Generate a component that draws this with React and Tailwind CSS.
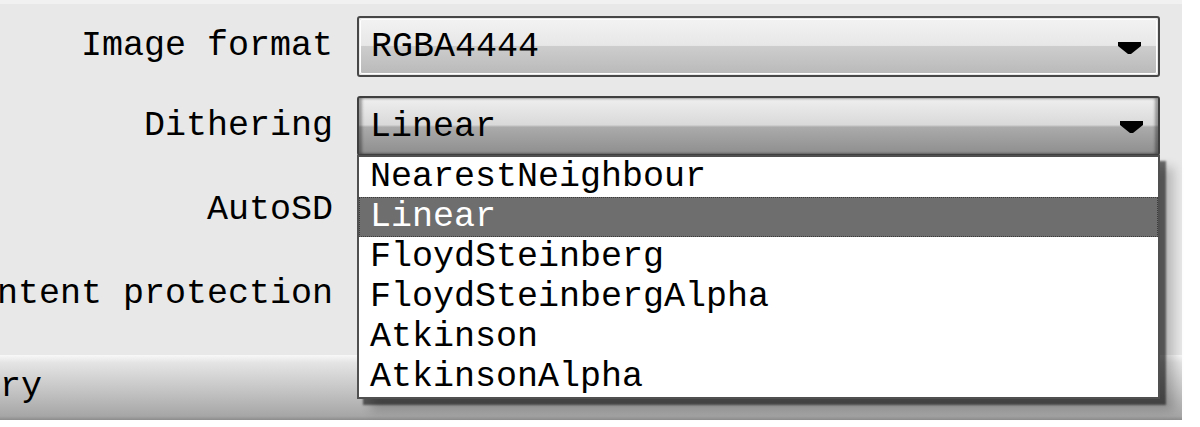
import React from "react";

const mono = { fontFamily: '"Liberation Mono", "Courier New", monospace' };

function Arrow() {
  return (
    <svg width="23" height="12" viewBox="0 0 23 12" className="shrink-0">
      <polygon points="0,0 23,0 23,4 13,12 10,12 0,4" fill="#000" />
    </svg>
  );
}

function Label({ children }) {
  return (
    <div className="w-[333px] shrink-0 flex justify-end whitespace-nowrap text-black text-[35px] leading-none">
      <span className="shrink-0">{children}</span>
    </div>
  );
}

const items = [
  "NearestNeighbour",
  "Linear",
  "FloydSteinberg",
  "FloydSteinbergAlpha",
  "Atkinson",
  "AtkinsonAlpha",
];

export default function App() {
  return (
    <div className="w-[1200px] h-[427px] bg-white overflow-hidden" style={mono}>
      <div className="w-[1182px] h-[420px] bg-[#e8e8e8] flex flex-col">
        <div className="h-[4px] bg-[#f1f1f1]" />
        <div className="flex-1 flex flex-col pt-[12px]">
          {/* Row 1 */}
          <div className="flex items-center gap-[24px] h-[61px]">
            <Label>Image format</Label>
            <div className="w-[803px] h-[61px] rounded-[3px] border-2 border-[#474747] p-px">
              <div className="h-full rounded-[2px] border border-white bg-[linear-gradient(to_bottom,#f2f2f2_0%,#e7e7e7_48%,#cdcdcd_50%,#bababa_100%)] flex items-center justify-between pl-[10px] pr-[15px] pt-[2px]">
                <span className="text-[35px] leading-none text-black">RGBA4444</span>
                <Arrow />
              </div>
            </div>
          </div>
          {/* Row 2 */}
          <div className="flex items-center gap-[24px] h-[60px] mt-[19px]">
            <Label>Dithering</Label>
            <div className="relative w-[803px] h-[60px]">
              <div className="h-full rounded-[3px] border-2 border-[#3f3f3f] shadow-[inset_3px_0_3px_rgba(0,0,0,0.35),inset_-3px_0_3px_rgba(0,0,0,0.35)] bg-[linear-gradient(to_bottom,#efefef_0%,#d9d9d9_48%,#ababab_52%,#8e8e8e_100%)] flex items-center justify-between pl-[11px] pr-[15px] pt-[2px]">
                <span className="text-[35px] leading-none text-black">Linear</span>
                <Arrow />
              </div>
              {/* Popup list */}
              <div className="absolute left-0 top-[59px] w-[803px] z-10 bg-white border-2 border-[#505050] shadow-[6px_6px_2px_rgba(0,0,0,0.55),14px_12px_10px_rgba(0,0,0,0.2)] flex flex-col">
                {items.map((it) =>
                  it === "Linear" ? (
                    <div
                      key={it}
                      className="h-[40px] flex items-center pl-[10px] bg-[#6e6e6e] text-white text-[35px] leading-none border border-dotted border-[#3c3c3c]"
                    >
                      {it}
                    </div>
                  ) : (
                    <div
                      key={it}
                      className="h-[40px] flex items-center pl-[11px] text-black text-[35px] leading-none"
                    >
                      {it}
                    </div>
                  )
                )}
              </div>
            </div>
          </div>
          {/* Row 3 */}
          <div className="flex items-center gap-[24px] h-[60px] mt-[24px]">
            <Label>AutoSD</Label>
          </div>
          {/* Row 4 */}
          <div className="flex items-center gap-[24px] h-[60px] mt-[24px]">
            <Label>Content protection</Label>
          </div>
        </div>
        {/* Bottom bar */}
        <div className="h-[65px] shrink-0 bg-[linear-gradient(to_bottom,#f8f8f8_0%,#e4e4e4_12%,#c4c4c4_55%,#a6a6a6_94%,#8c8c8c_100%)] flex items-center overflow-hidden">
          <span className="ml-[-105px] text-[35px] leading-none text-black whitespace-nowrap">Summary</span>
        </div>
      </div>
    </div>
  );
}
